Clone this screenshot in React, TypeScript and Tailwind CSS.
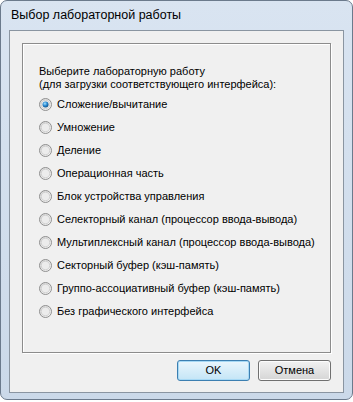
import React from 'react';

const options = [
  'Сложение/вычитание',
  'Умножение',
  'Деление',
  'Операционная часть',
  'Блок устройства управления',
  'Селекторный канал (процессор ввода-вывода)',
  'Мультиплексный канал (процессор ввода-вывода)',
  'Секторный буфер (кэш-память)',
  'Группо-ассоциативный буфер (кэш-память)',
  'Без графического интерфейса',
];

function Radio({ checked }: { checked: boolean }) {
  return (
    <svg width="13" height="13" viewBox="0 0 13 13" className="shrink-0">
      <defs>
        <linearGradient id="rbg" x1="0" y1="0" x2="1" y2="1">
          <stop offset="0" stopColor="#d4d4d4" />
          <stop offset="1" stopColor="#fbfbfb" />
        </linearGradient>
        <radialGradient id="dot" cx="0.4" cy="0.35" r="0.7">
          <stop offset="0" stopColor="#a8e2fb" />
          <stop offset="0.5" stopColor="#2a8ad4" />
          <stop offset="1" stopColor="#0b4a7e" />
        </radialGradient>
      </defs>
      <circle cx="6.5" cy="6.5" r="6" fill="url(#rbg)" stroke="#8f8f8f" strokeWidth="1" />
      <circle cx="6.5" cy="6.5" r="4.3" fill="#ececec" stroke="#c9c9c9" strokeWidth="0.8" />
      {checked && <circle cx="6.5" cy="6.5" r="3" fill="url(#dot)" />}
    </svg>
  );
}

export default function App() {
  return (
    <div className="w-[353px] h-[402px] bg-white">
      <div
        className="w-[353px] h-[400px] rounded-[7px] border border-[#6b7a8c] bg-gradient-to-b from-[#d9e4f1] to-[#cbd9e9] flex flex-col"
        style={{ fontFamily: '"Liberation Sans", Arial, sans-serif' }}
      >
        <div className="h-[29px] shrink-0 flex items-center pl-[10px] text-[12.5px] text-black">
          Выбор лабораторной работы
        </div>
        <div className="mx-[8px] mb-[6px] flex-1 border border-[#8a95a1] bg-[#f0f0f0] flex flex-col">
          <div className="mt-[12px] mx-[12px] h-[310px] border border-[#8c8c8c] shadow-[inset_1px_1px_0_#ffffff,1px_1px_0_#ffffff] pt-[21px] pl-[16px] text-[11px] text-black leading-[13px]">
            <div>Выберите лабораторную работу</div>
            <div>(для загрузки соответствующего интерфейса):</div>
            <div className="flex flex-col mt-[2px]">
              {options.map((o, i) => (
                <div key={o} className="flex items-center h-[23px] gap-[5px]">
                  <Radio checked={i === 0} />
                  <span>{o}</span>
                </div>
              ))}
            </div>
          </div>
          <div className="flex justify-end gap-[8px] mt-[7px] mr-[12px]">
            <button className="w-[73px] h-[21px] rounded-[3px] border border-[#3c7fb1] bg-gradient-to-b from-[#eaf6fd] to-[#c4e5f6] shadow-[inset_0_0_0_1px_#a7d9f5] text-[11px] text-black">
              OK
            </button>
            <button className="w-[73px] h-[21px] rounded-[3px] border border-[#707070] bg-gradient-to-b from-[#f2f2f2] to-[#d5d5d5] shadow-[inset_0_0_0_1px_#fcfcfc] text-[11px] text-black">
              Отмена
            </button>
          </div>
        </div>
      </div>
    </div>
  );
}
